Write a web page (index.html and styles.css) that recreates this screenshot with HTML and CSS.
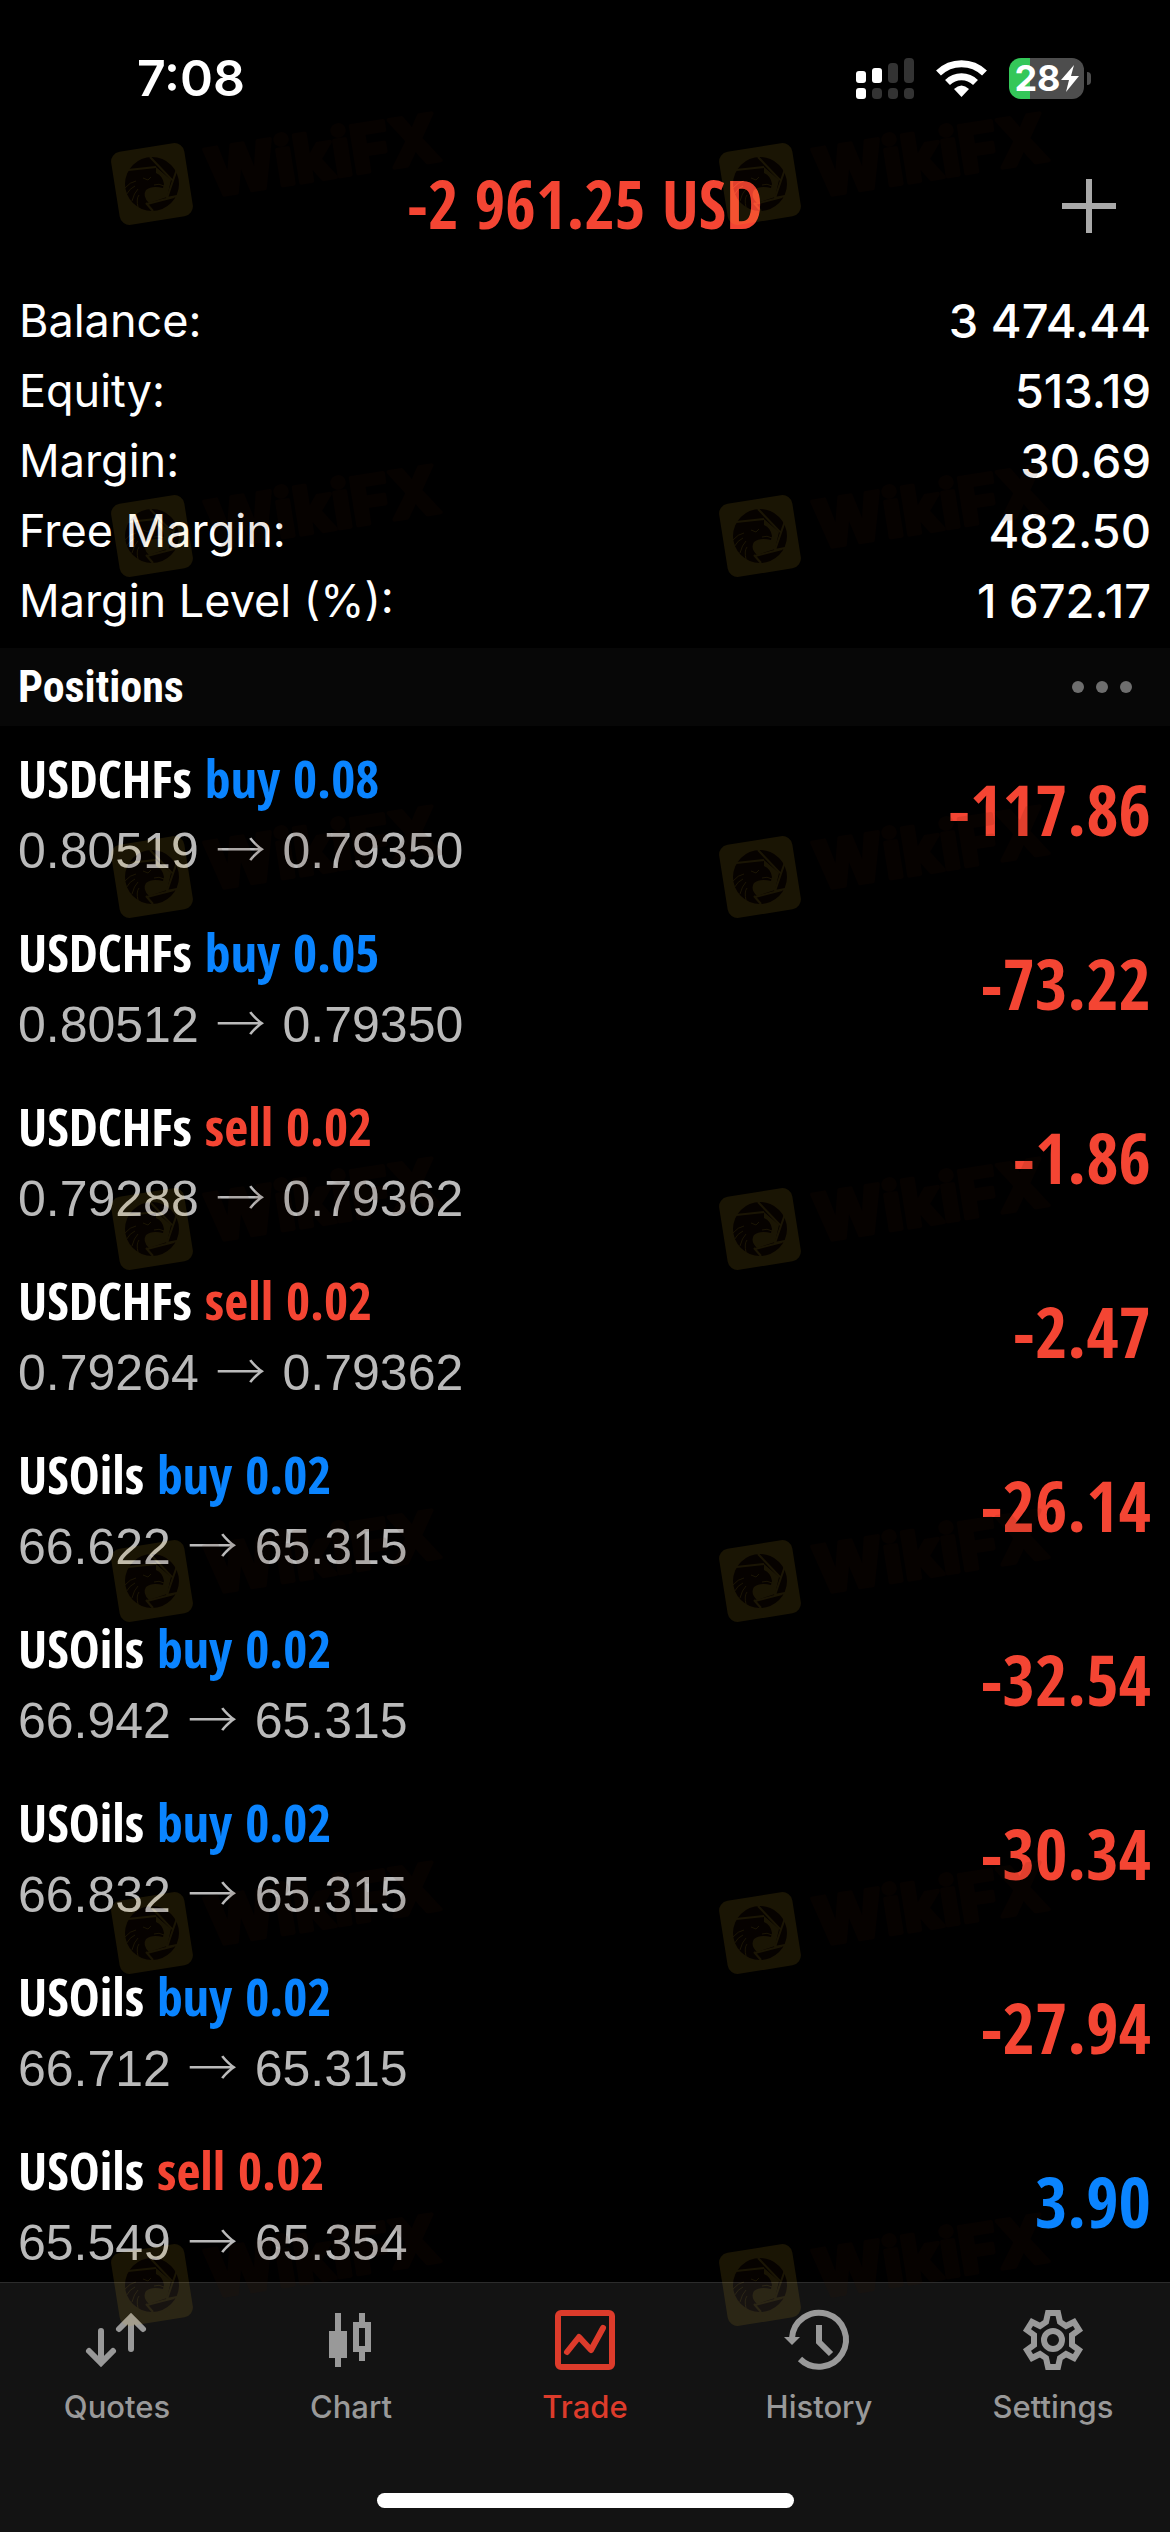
FILE: index.html
```html
<!DOCTYPE html>
<html lang="en">
<head>
  <meta charset="UTF-8">
  <meta name="viewport" content="width=device-width, initial-scale=1.0">
  <title>Trade</title>
  <link rel="stylesheet" href="styles.css">
</head>
<body>

  <div class="app">

    <!-- Status bar -->
    <div class="status-bar">
      <span class="time">7:08</span>
      <div class="status-icons">
        <svg class="signal" viewBox="0 0 58 41">
          <g fill="#fff">
            <rect x="0" y="13" width="10" height="12" rx="3"/>
            <rect x="16" y="10" width="10" height="15" rx="3"/>
            <rect x="0" y="30" width="10" height="11" rx="3"/>
          </g>
          <g fill="#333">
            <rect x="32" y="5" width="10" height="20" rx="4"/>
            <rect x="48" y="0" width="10" height="25" rx="4"/>
            <rect x="16" y="30" width="10" height="11" rx="4"/>
            <rect x="32" y="30" width="10" height="11" rx="4"/>
            <rect x="48" y="30" width="10" height="11" rx="4"/>
          </g>
        </svg>
        <svg class="wifi" viewBox="0 0 51 38">
          <g fill="none" stroke="#fff" stroke-width="7">
            <path d="M2.5 14 A33 33 0 0 1 48.500 14"/>
            <path d="M11.500 23.500 A20 20 0 0 1 39.500 23.500"/>
          </g>
          <path d="M25.500 38 L18 30 Q25.500 23 33 30 Z" fill="#fff"/>
        </svg>
        <div class="battery">
          <span class="battery-level">28</span>
          <svg class="bolt" viewBox="0 0 18 27"><path d="M13 0 L0 15 H8 L5 27 L18 11 H10 Z" fill="#fff"/></svg>
        </div>
      </div>
    </div>

    <!-- Title with floating profit -->
    <header class="header">
      <h1>-2 961.25 USD</h1>
      <button class="add-button" aria-label="New order">
        <svg viewBox="0 0 54 54"><path d="M27 0V54M0 27H54" stroke="#a9a9a9" stroke-width="6"/></svg>
      </button>
    </header>

    <!-- Account summary -->
    <dl class="summary">
      <div class="summary-row"><dt>Balance:</dt><dd>3 474.44</dd></div>
      <div class="summary-row"><dt>Equity:</dt><dd>513.19</dd></div>
      <div class="summary-row"><dt>Margin:</dt><dd>30.69</dd></div>
      <div class="summary-row"><dt>Free Margin:</dt><dd>482.50</dd></div>
      <div class="summary-row"><dt>Margin Level (%):</dt><dd>1 672.17</dd></div>
    </dl>

    <div class="section-bar">
      <h2>Positions</h2>
      <button class="more-button" aria-label="More">
        <svg viewBox="0 0 60 12" fill="#6e6e6e"><circle cx="6" cy="6" r="6"/><circle cx="30" cy="6" r="6"/><circle cx="54" cy="6" r="6"/></svg>
      </button>
    </div>

    <!-- Open positions -->
    <ul class="positions">
      <li class="position">
        <div>
          <p class="symbol">USDCHFs <span class="buy">buy 0.08</span></p>
          <p class="price">0.80519 <span class="arrow">→</span> 0.79350</p>
        </div>
        <span class="profit loss">-117.86</span>
      </li>
      <li class="position">
        <div>
          <p class="symbol">USDCHFs <span class="buy">buy 0.05</span></p>
          <p class="price">0.80512 <span class="arrow">→</span> 0.79350</p>
        </div>
        <span class="profit loss">-73.22</span>
      </li>
      <li class="position">
        <div>
          <p class="symbol">USDCHFs <span class="sell">sell 0.02</span></p>
          <p class="price">0.79288 <span class="arrow">→</span> 0.79362</p>
        </div>
        <span class="profit loss">-1.86</span>
      </li>
      <li class="position">
        <div>
          <p class="symbol">USDCHFs <span class="sell">sell 0.02</span></p>
          <p class="price">0.79264 <span class="arrow">→</span> 0.79362</p>
        </div>
        <span class="profit loss">-2.47</span>
      </li>
      <li class="position">
        <div>
          <p class="symbol">USOils <span class="buy">buy 0.02</span></p>
          <p class="price">66.622 <span class="arrow">→</span> 65.315</p>
        </div>
        <span class="profit loss">-26.14</span>
      </li>
      <li class="position">
        <div>
          <p class="symbol">USOils <span class="buy">buy 0.02</span></p>
          <p class="price">66.942 <span class="arrow">→</span> 65.315</p>
        </div>
        <span class="profit loss">-32.54</span>
      </li>
      <li class="position">
        <div>
          <p class="symbol">USOils <span class="buy">buy 0.02</span></p>
          <p class="price">66.832 <span class="arrow">→</span> 65.315</p>
        </div>
        <span class="profit loss">-30.34</span>
      </li>
      <li class="position">
        <div>
          <p class="symbol">USOils <span class="buy">buy 0.02</span></p>
          <p class="price">66.712 <span class="arrow">→</span> 65.315</p>
        </div>
        <span class="profit loss">-27.94</span>
      </li>
      <li class="position">
        <div>
          <p class="symbol">USOils <span class="sell">sell 0.02</span></p>
          <p class="price">65.549 <span class="arrow">→</span> 65.354</p>
        </div>
        <span class="profit gain">3.90</span>
      </li>
    </ul>

    <!-- Bottom tabs -->
    <footer class="tab-bar">
      <nav class="tabs">
        <a class="tab" href="#quotes">
          <svg viewBox="0 0 60 60" fill="none" stroke="currentColor" stroke-width="6" stroke-linecap="round">
            <path d="M14 21V52M2 41L14 53L26 41M44 39V8M32 19L44 7L56 19"/>
          </svg>
          Quotes
        </a>
        <a class="tab" href="#chart">
          <svg viewBox="0 0 60 60" fill="currentColor">
            <path d="M14 3H20V21H26V48H20V57H14V48H8V21H14Z"/>
            <path fill-rule="evenodd" d="M38 3H44V12H50V42H44V51H38V42H32V12H38ZM38 18V36H44V18Z"/>
          </svg>
          Chart
        </a>
        <a class="tab active" href="#trade">
          <svg viewBox="0 0 60 60" fill="none" stroke="currentColor" stroke-width="6">
            <rect x="3" y="3" width="54" height="54" rx="3"/>
            <path d="M12 42L24 27L36 40L48 18" stroke-linecap="round" stroke-linejoin="round"/>
          </svg>
          Trade
        </a>
        <a class="tab" href="#history">
          <svg viewBox="0 0 60 60" fill="none" stroke="currentColor" stroke-width="6">
            <path d="M3 28A27 27 0 1 1 11 49"/>
            <path d="M30 15V32L42 44"/>
            <path d="M-5 27H11L3 35Z" fill="currentColor" stroke="none"/>
          </svg>
          History
        </a>
        <a class="tab" href="#settings">
          <svg viewBox="-30 -30 60 60" fill="none" stroke="currentColor" stroke-width="6">
            <path d="M-5 -27H5L7 -18L13 -14L21 -18L26 -10L19 -5V5L26 10L21 18L13 14L7 18L5 27H-5L-7 18L-13 14L-21 18L-26 10L-19 5V-5L-26 -10L-21 -18L-13 -14L-7 -18Z"/>
            <circle r="9"/>
          </svg>
          Settings
        </a>
      </nav>
      <div class="home-indicator"></div>
    </footer>

    <!-- Watermark layer -->
    <svg class="hidden-defs" aria-hidden="true">
      <symbol id="mark" viewBox="0 0 340 140">
        <g transform="translate(42 84)">
          <rect x="-37" y="-37" width="74" height="74" rx="10" fill="#ffc828" transform="rotate(-9)"/>
          <circle r="27" fill="#3c1400"/>
          <path d="M4 -17L19 -4L15 13L-3 19Q-10 12 -6 6Q0 1 11 4L12 0Q11 -8 4 -11Z" fill="#ffc828"/>
          <path d="M-24 -14L4 -17M-2 -27L20 -4M25 -15L15 14L25 12M-5 20L22 13M-6 19L1 27" fill="none" stroke="#ffc828" stroke-width="2"/>
          <path d="M-27 4Q-22 -2 -16 -3M-26 11Q-22 4 -17 2M-20 17Q-18 9 -14 5M-14 23Q-16 15 -13 11M-9 -6L-4 -4L-1 -7M2 1Q7 -1 12 2" fill="none" stroke="#ffc828"/>
        </g>
        <text class="mark-text" x="100" y="97" transform="rotate(-9 100 97)">WikiFX</text>
      </symbol>
    </svg>
    <div class="watermarks" aria-hidden="true">
      <svg><use href="#mark"/></svg><svg><use href="#mark"/></svg>
      <svg><use href="#mark"/></svg><svg><use href="#mark"/></svg>
      <svg><use href="#mark"/></svg><svg><use href="#mark"/></svg>
      <svg><use href="#mark"/></svg><svg><use href="#mark"/></svg>
      <svg><use href="#mark"/></svg><svg><use href="#mark"/></svg>
      <svg><use href="#mark"/></svg><svg><use href="#mark"/></svg>
      <svg><use href="#mark"/></svg><svg><use href="#mark"/></svg>
    </div>

  </div>

</body>
</html>
```
FILE: styles.css
```css
* {
  box-sizing: border-box;
  margin: 0;
  padding: 0;
}

body {
  font-family: Inter, "Liberation Sans", sans-serif;
  background-color: #000;
  color: #fff;
}

button {
  background: none;
  border: none;
  cursor: pointer;
}

svg {
  display: block;
}

.app {
  position: relative;
  display: flex;
  flex-direction: column;
  height: 100vh;
  overflow: hidden;
}

/* Status bar */
.status-bar {
  display: flex;
  justify-content: space-between;
  align-items: center;
  flex: none;
  height: 156px;
  padding: 0 79px 0 137px;
}

.time {
  font-size: 50px;
  font-weight: 600;
}

.status-icons {
  display: flex;
  align-items: center;
  gap: 22px;
}

.signal {
  width: 58px;
  height: 41px;
}

.wifi {
  width: 51px;
  height: 38px;
}

.battery {
  position: relative;
  display: flex;
  align-items: center;
  justify-content: center;
  width: 75px;
  height: 41px;
  margin-right: 7px;
  border-radius: 12px;
  background: linear-gradient(to right, #34c759 28%, #4d4d4d 28%);
}

.battery::after {
  content: "";
  position: absolute;
  right: -7px;
  width: 4px;
  height: 13px;
  border-radius: 0 4px 4px 0;
  background-color: #4d4d4d;
}

.battery-level {
  font-size: 36px;
  font-weight: 700;
  line-height: 41px;
}

.bolt {
  width: 18px;
  height: 27px;
}

/* Header */
.header {
  display: grid;
  grid-template-columns: 54px 1fr 54px;
  align-items: center;
  flex: none;
  height: 100px;
  padding: 0 54px;
}

.header h1 {
  grid-column: 2;
  padding-bottom: 6px;
  font-family: "Open Sans Condensed", "Roboto Condensed", sans-serif;
  font-size: 66px;
  text-align: center;
  color: #f44533;
}

.add-button,
.add-button svg {
  width: 54px;
  height: 54px;
}

/* Account summary */
.summary {
  flex: none;
  padding: 30px 19px 12px;
}

.summary-row {
  display: flex;
  justify-content: space-between;
  font-size: 45px;
  line-height: 70px;
}

.summary-row dd {
  font-size: 47px;
  font-weight: 500;
}

.section-bar {
  display: flex;
  justify-content: space-between;
  align-items: center;
  flex: none;
  height: 78px;
  padding: 0 38px 0 18px;
  background-color: #070707;
}

.section-bar h2 {
  font-family: "Roboto Condensed", "Liberation Sans", sans-serif;
  font-size: 44px;
}

.more-button svg {
  width: 60px;
  height: 12px;
}

/* Positions */
.positions {
  flex: 1;
  min-height: 0;
  overflow: hidden;
  list-style-type: none;
}

.position {
  display: flex;
  justify-content: space-between;
  align-items: center;
  height: 174px;
  padding: 6px 19px 0 18px;
}

.symbol {
  margin-bottom: 6px;
  font-family: "Open Sans Condensed", "Roboto Condensed", sans-serif;
  font-size: 52px;
  font-weight: bold;
  line-height: 65px;
}

.price {
  font-family: "Liberation Sans", Arial, sans-serif;
  font-size: 50px;
  line-height: 71px;
  color: #bababa;
}

.arrow {
  margin: 0 3px;
  font-family: "Noto Sans CJK JP", sans-serif;
  font-weight: 300;
  line-height: 1;
}

.profit {
  padding-bottom: 14px;
  font-family: "Open Sans Condensed", "Roboto Condensed", sans-serif;
  font-size: 70px;
  font-weight: bold;
}

.buy,
.gain {
  color: #0a84ff;
}

.sell,
.loss {
  color: #f44533;
}

/* Tab bar */
.tab-bar {
  display: flex;
  flex-direction: column;
  justify-content: space-between;
  align-items: center;
  flex: none;
  height: 250px;
  padding: 27px 0 24px;
  border-top: 1px solid #2c2c2c;
  background-color: #131313;
}

.tabs {
  display: flex;
  width: 100%;
}

.tab {
  display: flex;
  flex: 1;
  flex-direction: column;
  align-items: center;
  gap: 18px;
  font-size: 31px;
  font-weight: 500;
  line-height: 38px;
  color: #999;
  text-decoration: none;
}

.tab svg {
  width: 60px;
  height: 60px;
  overflow: visible;
}

.tab.active {
  color: #dd3b2b;
}

.home-indicator {
  width: 417px;
  height: 15px;
  border-radius: 8px;
  background-color: #fff;
}

/* Watermarks lie over the whole screen */
.hidden-defs {
  position: absolute;
  width: 0;
  height: 0;
}

.watermarks {
  position: absolute;
  top: 100px;
  left: 110px;
  display: grid;
  grid-template-columns: 608px 340px;
  grid-template-rows: 352px 341px repeat(5, 352px);
  opacity: 0.1;
  pointer-events: none;
}

.watermarks svg {
  width: 340px;
  height: 140px;
}

.mark-text {
  font-family: Inter, sans-serif;
  font-size: 66px;
  font-weight: 800;
  fill: #3c1400;
  stroke: #3c1400;
  stroke-width: 4px;
  stroke-linejoin: round;
}
```
